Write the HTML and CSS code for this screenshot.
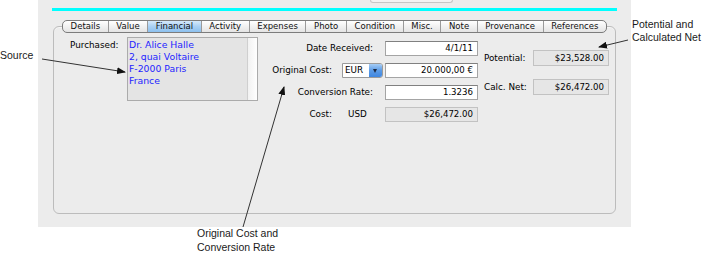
FILE: index.html
```html
<!DOCTYPE html>
<html lang="en">
<head>
  <meta charset="UTF-8" />
  <meta name="viewport" content="width=device-width, initial-scale=1.0"/>
  <title>Financial</title>
  <link rel="stylesheet" href="styles.css">
</head>
<body>
  <div class="stage">
    <div class="panel">
      <div class="stub"></div>
      <div class="bar"></div>
      <div class="group">
        <div class="tabs">
          <span class="tab">Details</span>
          <span class="tab">Value</span>
          <span class="tab active">Financial</span>
          <span class="tab">Activity</span>
          <span class="tab">Expenses</span>
          <span class="tab">Photo</span>
          <span class="tab">Condition</span>
          <span class="tab">Misc.</span>
          <span class="tab">Note</span>
          <span class="tab">Provenance</span>
          <span class="tab">References</span>
        </div>

        <div class="content">
          <div class="purchased">
            <span class="purchased-label">Purchased:</span>
            <div class="address">
              <div class="address-text">
                Dr. Alice Halle<br>
                2, quai Voltaire<br>
                F-2000 Paris<br>
                France
              </div>
              <div class="scroll"></div>
            </div>
          </div>

          <div class="costs">
            <span class="lbl wide">Date Received:</span>
            <span class="field">4/1/11</span>

            <span class="lbl">Original Cost:</span>
            <span class="popup"><span class="popup-val">EUR</span><span class="popup-btn"></span></span>
            <span class="field">20.000,00 €</span>

            <span class="lbl wide">Conversion Rate:</span>
            <span class="field">1.3236</span>

            <span class="lbl">Cost:</span>
            <span class="currency">USD</span>
            <span class="field ro">$26,472.00</span>
          </div>

          <div class="totals">
            <span class="lbl">Potential:</span>
            <span class="field ro">$23,528.00</span>
            <span class="lbl">Calc. Net:</span>
            <span class="field ro">$26,472.00</span>
          </div>
        </div>
      </div>
    </div>

    <!-- callouts -->
    <svg class="arrows" width="703" height="253" viewBox="0 0 703 253">
      <defs>
        <marker id="head" markerWidth="9" markerHeight="7" refX="8" refY="3.5" orient="auto" markerUnits="userSpaceOnUse">
          <path d="M0,0 L9,3.5 L0,7 z" fill="#111"/>
        </marker>
      </defs>
      <line x1="42" y1="59" x2="125" y2="72" stroke="#333" stroke-width="1" marker-end="url(#head)"/>
      <line x1="628" y1="40" x2="599" y2="47" stroke="#333" stroke-width="1" marker-end="url(#head)"/>
      <line x1="243" y1="227" x2="284" y2="87" stroke="#333" stroke-width="1" marker-end="url(#head)"/>
    </svg>
    <div class="note note-source">Source</div>
    <div class="note note-net">Potential and<br>Calculated Net</div>
    <div class="note note-cost">Original Cost and<br>Conversion Rate</div>
  </div>
</body>
</html>
```

FILE: styles.css
```css
body {
  margin: 0;
  padding: 0;
  background-color: #fff;
  font-family: "DejaVu Sans", Verdana, sans-serif;
  color: #000;
}
.stage {
  position: relative;
  width: 703px;
  height: 253px;
  overflow: hidden;
}
.panel {
  margin-left: 38px;
  width: 593px;
  height: 227px;
  background-color: #ececec;
}
.stub {
  margin-left: 332px;
  width: 83px;
  height: 3px;
  box-sizing: border-box;
  border: 1px solid #c6c6c6;
  border-top: none;
  border-radius: 0 0 4px 4px;
  background-color: #f3f3f3;
}
.bar {
  margin-top: 5px;
  margin-left: 14px;
  width: 565px;
  height: 3px;
  background-color: #00ffff;
}
.group {
  margin-top: 15px;
  margin-left: 15px;
  width: 563px;
  height: 188px;
  box-sizing: border-box;
  border: 1px solid #bcbcbc;
  border-radius: 6px;
  box-shadow: inset 0 1px 0 #f6f6f6;
}
.tabs {
  display: flex;
  margin-top: -7px;
  margin-left: 8px;
  width: 545px;
  height: 13px;
  box-sizing: border-box;
  border: 1px solid #7c7c7c;
  border-radius: 5px;
  overflow: hidden;
  background: linear-gradient(#ffffff, #f1f1f1 50%, #e4e4e4);
}
.tab {
  flex: 1 1 auto;
  padding: 0 7px;
  font-size: 8.5px;
  line-height: 11px;
  text-align: center;
  color: #111;
  border-left: 1px solid #9a9a9a;
}
.tab:first-child {
  border-left: none;
}
.tab.active {
  background: linear-gradient(#d6e9fb, #a9d0f4 50%, #8cc0ee);
}
.content {
  display: flex;
  align-items: flex-start;
  margin-top: 4px;
}
.purchased {
  display: flex;
  margin-left: 16px;
}
.purchased-label {
  width: 57px;
  margin-top: 2px;
  font-size: 8.8px;
  line-height: 12px;
  white-space: nowrap;
}
.address {
  display: flex;
  width: 131px;
  height: 64px;
  box-sizing: border-box;
  border: 1px solid #ababab;
  background-color: #e4e4e4;
}
.address-text {
  flex: 1;
  padding: 1px 0 0 1px;
  font-size: 9.3px;
  line-height: 12px;
  color: #1f1fff;
  white-space: nowrap;
}
.scroll {
  width: 9px;
  border-left: 1px solid #cfcfcf;
  background: linear-gradient(to right, #f2f2f2, #ffffff);
}
.costs {
  display: grid;
  grid-template-columns: 65px 50px 93px;
  grid-auto-rows: 15px;
  row-gap: 7px;
  margin-left: 12px;
  margin-top: 4px;
}
.lbl {
  font-size: 8.8px;
  line-height: 15px;
  white-space: nowrap;
  text-align: right;
  padding-right: 3px;
}
.lbl.wide {
  grid-column: 1 / 3;
  padding-right: 12px;
}
.currency {
  font-size: 8.8px;
  line-height: 15px;
  padding-left: 13px;
}
.field {
  box-sizing: border-box;
  height: 15px;
  border: 1px solid #a4a4a4;
  border-top-color: #808080;
  background-color: #fff;
  font-size: 8.6px;
  line-height: 13px;
  text-align: right;
  padding-right: 4px;
  white-space: nowrap;
}
.field.ro {
  background-color: #e6e6e6;
  border-color: #c2c2c2;
}
.popup {
  display: flex;
  margin-left: 7px;
  width: 41px;
  height: 15px;
  box-sizing: border-box;
  border: 1px solid #9a9a9a;
  border-radius: 0 3px 3px 0;
  background-color: #fff;
}
.popup-val {
  flex: 1;
  padding-left: 2px;
  font-size: 8.8px;
  line-height: 13px;
}
.popup-btn {
  position: relative;
  width: 13px;
  border-radius: 0 2px 2px 0;
  background: linear-gradient(#a6cdf5, #5b9be6 50%, #3f86e0);
}
.popup-btn::after {
  content: "";
  position: absolute;
  left: 4px;
  top: 5px;
  border-left: 2.5px solid transparent;
  border-right: 2.5px solid transparent;
  border-top: 4px solid #1c2a44;
}
.totals {
  display: grid;
  grid-template-columns: 44px 76px;
  grid-auto-rows: 16px;
  column-gap: 5px;
  row-gap: 13px;
  margin-left: 6px;
  margin-top: 13px;
}
.totals .lbl {
  text-align: left;
  padding-right: 0;
  line-height: 16px;
}
.totals .field {
  height: 16px;
  line-height: 14px;
}
.arrows {
  position: absolute;
  left: 0;
  top: 0;
}
.note {
  position: absolute;
  font-family: "Liberation Sans", Arial, sans-serif;
  font-size: 10.5px;
  line-height: 13px;
  color: #1a1a1a;
  white-space: nowrap;
}
.note-source {
  left: 0;
  top: 49px;
}
.note-net {
  left: 632px;
  top: 18px;
}
.note-cost {
  left: 197px;
  top: 226px;
  line-height: 14px;
}
```
